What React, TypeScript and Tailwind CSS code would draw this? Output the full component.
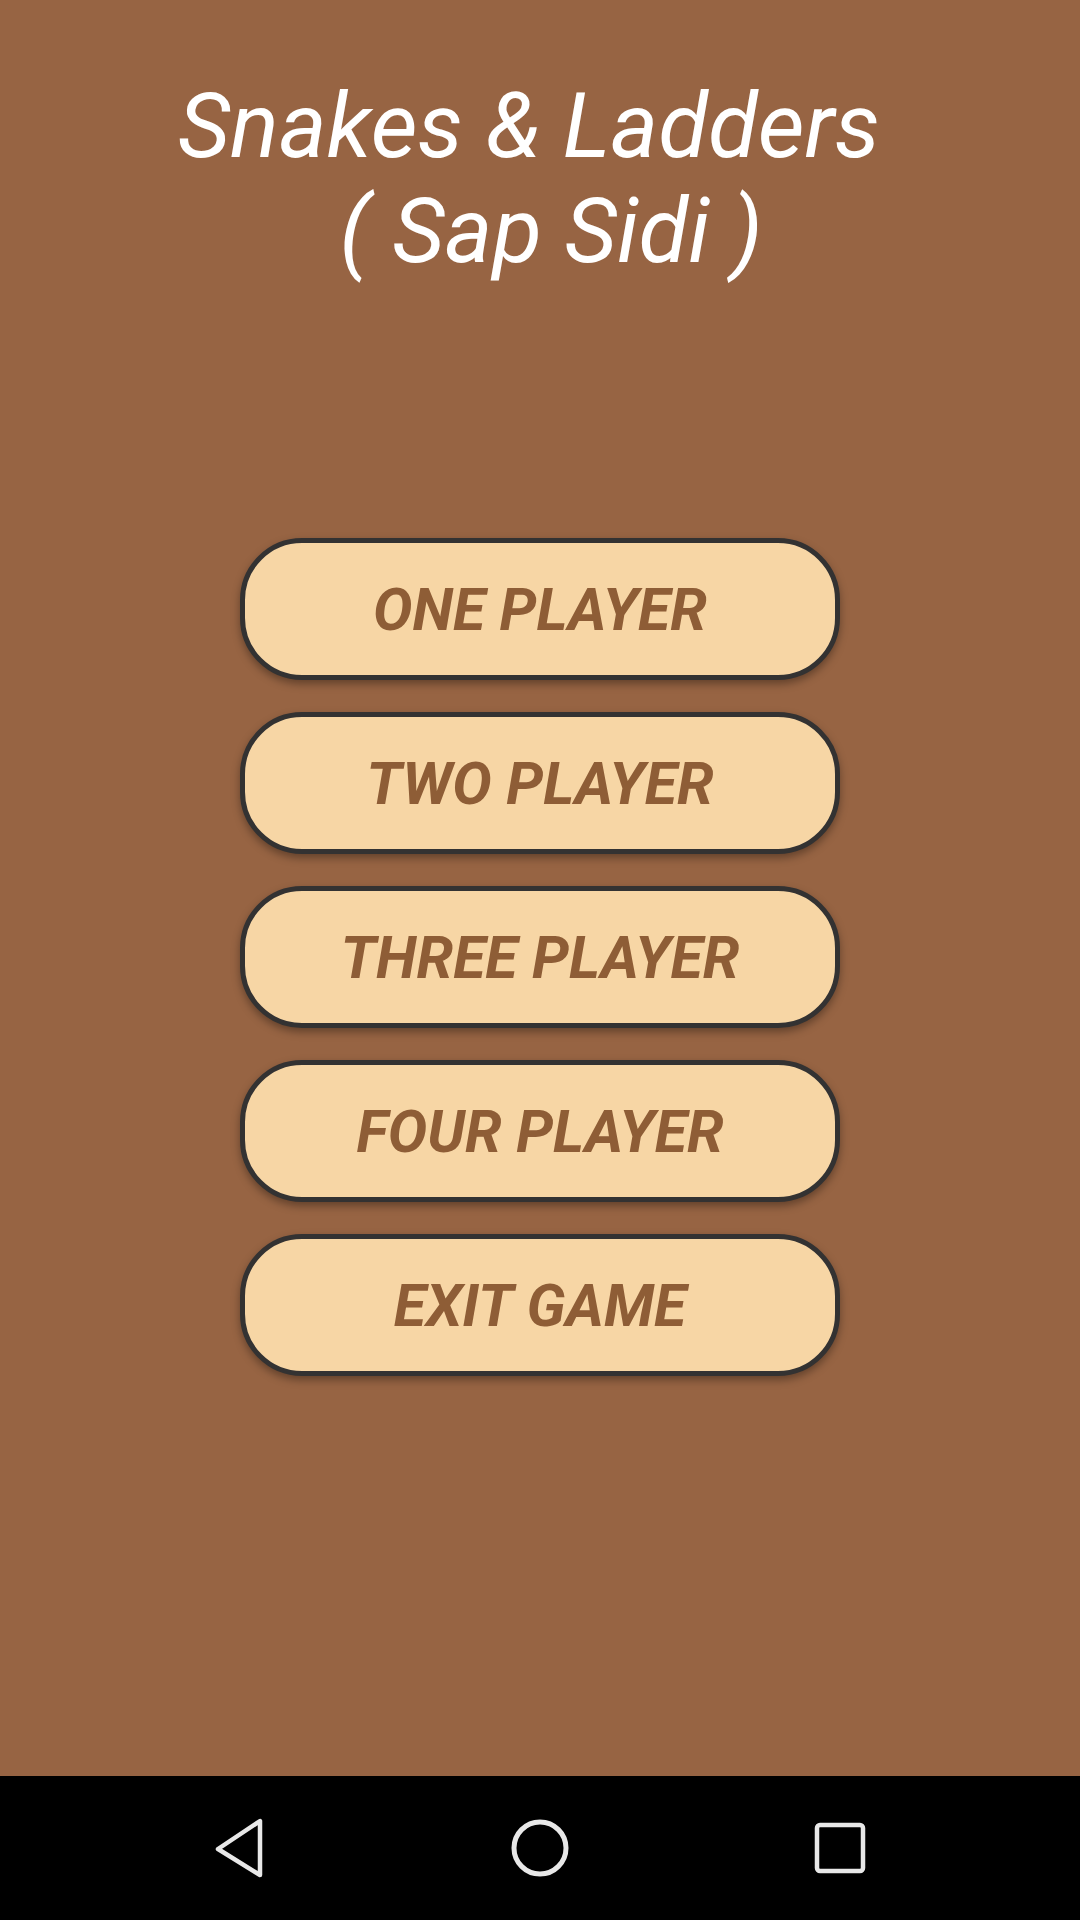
import { ReactNode } from 'react';

const menu = ['ONE PLAYER', 'TWO PLAYER', 'THREE PLAYER', 'FOUR PLAYER', 'EXIT GAME'];

function MenuButton({ children }: { children: ReactNode }) {
    return (
        <button className="w-[600px] h-[142px] rounded-[62px] border-[5px] border-[#333232] bg-[#f7d6a5] shadow-[0_4px_8px_rgba(0,0,0,0.35)] flex items-center justify-center">
            <span className="font-['Roboto'] italic font-bold text-[59px] leading-none text-[#8e5d36]">{children}</span>
        </button>
    );
}

function NavBar() {
    return (
        <div className="h-[144px] bg-black flex items-center justify-between px-[214px]">
            {/* back */}
            <svg width="52" height="62" viewBox="0 0 52 62" className="text-[#e8e8e8]">
                <path d="M46 4 L46 58 L4 32 Z" fill="none" stroke="currentColor" strokeWidth="4.5" strokeLinejoin="round" />
            </svg>
            {/* home */}
            <svg width="60" height="60" viewBox="0 0 60 60" className="text-[#e8e8e8]">
                <circle cx="30" cy="30" r="26" fill="none" stroke="currentColor" strokeWidth="5" />
            </svg>
            {/* recents */}
            <svg width="52" height="52" viewBox="0 0 52 52" className="text-[#e8e8e8]">
                <rect x="3" y="3" width="46" height="46" rx="3" fill="none" stroke="currentColor" strokeWidth="4.5" />
            </svg>
        </div>
    );
}

export default function App() {
    return (
        <div className="w-[1080px] h-[1920px] flex flex-col bg-[#976443]">
            <div className="flex-1 flex flex-col items-center pt-[74px]">
                <h1 className="font-['Roboto'] italic font-normal text-[91px] leading-[105px] text-white text-center whitespace-pre">
                    {'Snakes & Ladders \n ( Sap Sidi )'}
                </h1>
                <div className="mt-[254px] flex flex-col items-center gap-[32px]">
                    {menu.map((label) => (
                        <MenuButton key={label}>{label}</MenuButton>
                    ))}
                </div>
            </div>
            <NavBar />
        </div>
    );
}
